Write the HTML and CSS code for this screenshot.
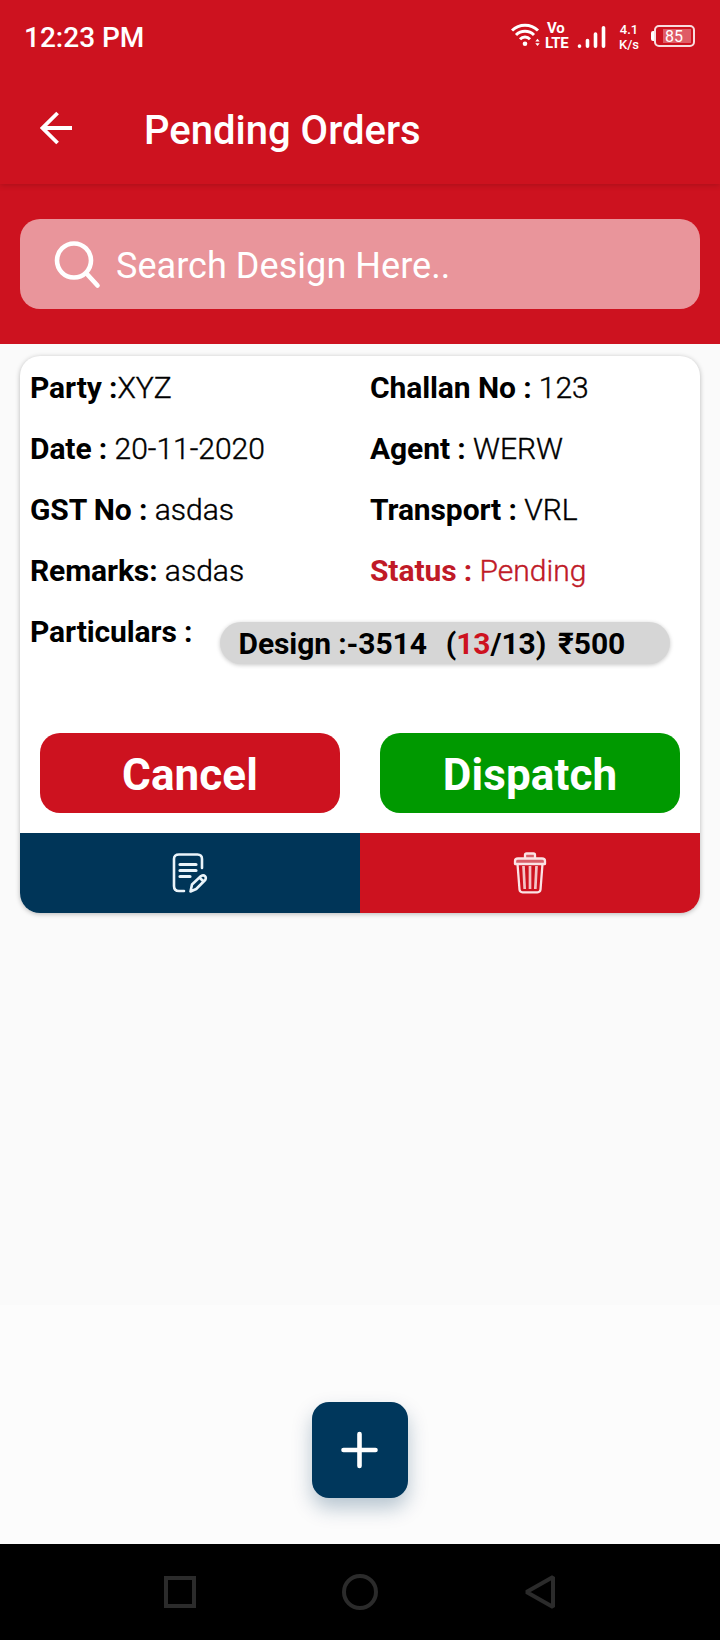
FILE: index.html
```html
<!DOCTYPE html>
<html lang="en">
<head>
<meta charset="utf-8">
<title>Pending Orders</title>
<link rel="stylesheet" href="styles.css">
</head>
<body>
<div class="screen">
  <div class="status-bar">
    <span class="clock">12:23 PM</span>
    <div class="indicators">
      <svg class="wifi" width="30" height="26" viewBox="0 0 30 26" fill="none" stroke="#fff" stroke-width="3">
        <path d="M1 8.500a18.500 18.500 0 0 1 26 0M5 13a12.800 12.800 0 0 1 18 0M9 17.200a7 7 0 0 1 10 0"/>
        <circle cx="14" cy="21.800" r="2.300" fill="#fff" stroke="none"/>
        <path d="M24.300 19.500l2.200-2.800 2.200 2.800zM24.300 21.200l2.200 2.800 2.200-2.800z" fill="#fff" stroke="none"/>
      </svg>
      <span class="volte"><span class="vo">Vo</span><span>LTE</span></span>
      <svg class="signal" width="29" height="26" viewBox="0 0 29 26" stroke="#fff" stroke-width="3.600" stroke-linecap="round">
        <path d="M2.500 22.100v.2M10.500 16.500v5.800M18.500 10v12.300M26.500 3.800v18.500"/>
      </svg>
      <span class="speed"><span>4.1</span><span>K/s</span></span>
      <span class="battery"><span class="battery-tip"></span><span class="battery-body"><span class="battery-level">85</span></span></span>
    </div>
  </div>
  <header class="app-bar">
    <svg class="back" width="34" height="34" viewBox="0 0 34 34" fill="none" stroke="#fff" stroke-width="3.800">
      <path d="M32 17H2M17.600 2L2.500 17l15.100 15"/>
    </svg>
    <h1 class="title">Pending Orders</h1>
  </header>
  <div class="search-area">
    <div class="search">
      <svg width="50" height="50" viewBox="0 0 50 50" fill="none" stroke="#fff" stroke-width="4.600" stroke-linecap="round">
        <circle cx="21" cy="21.500" r="17"/><path d="M33.500 34.500l11 12"/>
      </svg>
      <span>Search Design Here..</span>
    </div>
  </div>
  <main class="content">
    <article class="card">
      <div class="details">
        <p><b>Party :</b>XYZ</p>
        <p><b>Challan No :</b> 123</p>
        <p><b>Date :</b> 20-11-2020</p>
        <p><b>Agent :</b> WERW</p>
        <p><b>GST No :</b> asdas</p>
        <p><b>Transport :</b> VRL</p>
        <p><b>Remarks:</b> asdas</p>
        <p class="status"><b>Status :</b> Pending</p>
      </div>
      <div class="particulars">
        <b>Particulars :</b>
        <div class="chip"><span class="design">Design :-3514</span><span class="qty">(<span class="left">13</span>/13)</span><span>₹500</span></div>
      </div>
      <div class="actions">
        <div class="button cancel">Cancel</div>
        <div class="button dispatch">Dispatch</div>
      </div>
      <div class="tools">
        <div class="tool edit">
          <svg width="36" height="42" viewBox="0 0 36 42" fill="none" stroke="#eaf4fa" stroke-width="2.600" stroke-linecap="round" stroke-linejoin="round">
            <path d="M30 16V7Q30 2.500 25.500 2.500H7Q2 2.500 2 7v27q0 5 5 5h5"/>
            <path d="M8 12.500h16M8 18.500h16M8 24.500h10" stroke-width="3.200"/>
            <path d="M18.500 39.500l1.500-7 9-8.500q2.500-1.500 4 .2t.2 3.800l-9 9zM27.500 25.500l4 4"/>
          </svg>
        </div>
        <div class="tool delete">
          <svg width="34" height="42" viewBox="0 0 34 42" fill="none" stroke="#fbe3e5" stroke-width="2.300" stroke-linejoin="round">
            <path d="M12 6V3q0-1.500 1.500-1.500h7q1.500 0 1.500 1.500v3" fill="#d95e68"/>
            <path d="M2 12V9q0-2.500 3-2.500h24q3 0 3 2.500v3z" fill="#d95e68"/>
            <path d="M4.500 12l2 25.500q.3 2.800 3 2.800h15q2.700 0 3-2.800l2-25.500"/>
            <path d="M10.500 14l1.200 23M23.500 14l-1.200 23M17 14v23" stroke-width="2.700" stroke="#f3c3c7"/>
          </svg>
        </div>
      </div>
    </article>
  </main>
  <footer class="add-area">
    <div class="add">
      <svg width="38" height="38" viewBox="0 0 38 38" stroke="#fff" stroke-width="4.600" stroke-linecap="round"><path d="M18.500 3v32M2.500 19h32"/></svg>
    </div>
  </footer>
  <nav class="nav-bar">
    <svg width="36" height="36" viewBox="0 0 36 36" fill="none" stroke="#2b2b2b" stroke-width="4"><path d="M4 4h28v28H4z"/></svg>
    <svg width="36" height="36" viewBox="0 0 36 36" fill="none" stroke="#2b2b2b" stroke-width="4"><circle cx="18" cy="18" r="16"/></svg>
    <svg width="36" height="36" viewBox="0 0 36 36" fill="none" stroke="#2b2b2b" stroke-width="4" stroke-linejoin="bevel"><path d="M31 3v30L4.500 18z"/></svg>
  </nav>
</div>
</body>
</html>
```

FILE: styles.css
```css
* { box-sizing: border-box; }
body { margin: 0; font-family: Roboto, "Noto Sans", sans-serif; }
svg { display: block; flex: none; }
.screen { display: flex; flex-direction: column; width: 720px; height: 1640px; background: #fafafa; }
.status-bar { display: flex; justify-content: space-between; position: relative; z-index: 1; height: 72px; padding: 0 25px 0 24px; background: #cd121f; color: #fff; }
.clock { font-size: 28px; font-weight: 500; line-height: 75px; }
.indicators { display: flex; align-items: flex-start; padding-top: 22px; }
.wifi { margin-right: 4px; }
.volte { display: flex; flex-direction: column; width: 26px; margin-top: -1px; font-size: 15px; line-height: 15px; font-weight: 700; letter-spacing: -0.3px; }
.vo { padding-left: 2px; }
.signal { margin-left: 6px; margin-top: 2px; }
.speed { display: flex; flex-direction: column; align-items: center; width: 20px; margin-left: 13px; font-size: 13px; line-height: 15px; font-weight: 500; }
.battery { display: flex; align-items: center; margin: 3px 0 0 12px; }
.battery-tip { width: 3px; height: 10px; background: #fff; border-radius: 2px 0 0 2px; }
.battery-body { display: flex; width: 41px; height: 22px; padding: 2px 2px 2px 7px; border: 2px solid #f8dddf; border-radius: 5px; }
.battery-level { flex: 1; padding-left: 2px; background: #df5c66; font-size: 16px; line-height: 15px; }
.app-bar { display: flex; align-items: center; position: relative; height: 112px; padding: 0 40px; background: #cd121f; box-shadow: 0 1px 6px rgba(0, 0, 0, .18); color: #fff; }
.title { margin: 6px 0 0 70px; font-size: 40px; font-weight: 500; line-height: 50px; }
.search-area { height: 160px; padding: 35px 20px; background: #cd121f; }
.search { display: flex; align-items: center; gap: 13px; height: 90px; padding-left: 33px; border-radius: 20px; background: #e9959b; color: #fff; font-size: 36px; letter-spacing: .05px; }
.search span { padding-top: 3px; }
.content { flex: 1; padding: 12px 20px; }
.card { height: 557px; padding-top: 1px; overflow: hidden; border-radius: 20px; background: #fff; box-shadow: 0 1px 5px rgba(0, 0, 0, .27); font-size: 30px; line-height: 61px; color: #000; }
.details { display: grid; grid-template-columns: 340px 1fr; padding-left: 10px; }
.details p { margin: 0; font-weight: 300; white-space: nowrap; -webkit-text-stroke: .4px currentColor; }
.details b, .particulars b { font-weight: 700; letter-spacing: -0.1px; -webkit-text-stroke: 0; }
.details .status { color: #c01a27; }
.particulars { display: flex; height: 132px; padding-left: 10px; }
.chip { display: flex; width: 450px; height: 42px; margin: 21px 0 0 28px; padding-left: 18px; border-radius: 21px; background: #d6d6d6; box-shadow: 0 1px 4px rgba(0, 0, 0, .22); font-weight: 700; line-height: 43px; letter-spacing: -0.1px; }
.design { margin-right: 19px; }
.qty { margin-right: 12px; }
.left { color: #cd121f; }
.actions { display: grid; grid-template-columns: 1fr 1fr; gap: 40px; padding: 0 20px 20px; }
.button { height: 80px; border-radius: 20px; color: #fff; font-size: 44px; font-weight: 700; line-height: 85px; letter-spacing: .1px; text-align: center; }
.cancel { background: #cd121f; }
.dispatch { background: #009900; }
.tools { display: grid; grid-template-columns: 1fr 1fr; height: 80px; }
.tool { display: flex; align-items: center; justify-content: center; }
.edit { background: #003558; }
.delete { background: #cd121f; }
.add-area { display: flex; justify-content: center; height: 239px; padding-top: 97px; background: #fcfcfc; }
.add { display: flex; align-items: center; justify-content: center; width: 96px; height: 96px; border-radius: 17px; background: #00375c; box-shadow: 0 10px 20px rgba(0, 55, 92, .28); }
.nav-bar { display: flex; align-items: center; justify-content: center; gap: 144px; height: 96px; background: #000; }
```
